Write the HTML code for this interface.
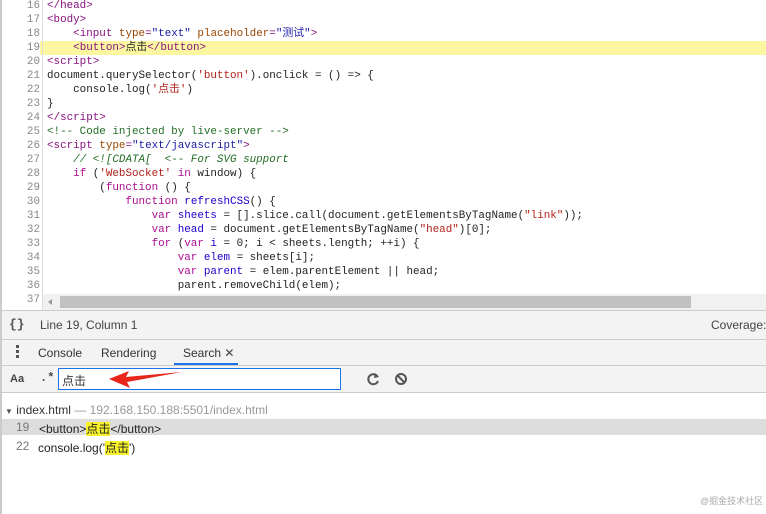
<!DOCTYPE html>
<html><head><meta charset="utf-8"><style>
*{margin:0;padding:0;box-sizing:border-box}
body{width:766px;height:514px;overflow:hidden;background:#fff;font-family:"Liberation Sans","Noto Sans CJK SC",sans-serif;position:relative}
.code{position:absolute;left:0;top:0;width:766px;height:294px;font-family:"Liberation Mono","Noto Sans CJK SC",monospace;font-size:10.9px;color:#222}
.ln{position:absolute;left:0;height:14px;line-height:14px;width:766px;white-space:pre}
.ln .n{display:inline-block;width:40px;text-align:right;color:#888;padding-right:0}
.ln .c{position:absolute;left:47px}
.hl{background:#fbf6a0}
.hl .n{background:#fff}
.t{color:#881280}.a{color:#994500}.v{color:#1a1aa6}.k{color:#aa0d91}.s{color:#b0221a}.cm{color:#236e25;font-style:italic}.d{color:#1c00cf}
.gut{position:absolute;left:42px;top:0;width:1px;height:310px;background:#ddd}
.lb{position:absolute;left:0;top:0;width:2px;height:514px;background:#ccc}
</style></head><body>
<div class="code">
<div class="ln" style="top:-1px"><span class="n">16</span><span class="c"><span class="t">&lt;/head&gt;</span></span></div>
<div class="ln" style="top:13px"><span class="n">17</span><span class="c"><span class="t">&lt;body&gt;</span></span></div>
<div class="ln" style="top:27px"><span class="n">18</span><span class="c">    <span class="t">&lt;input</span> <span class="a">type</span><span class="t">=</span><span class="v">"text"</span> <span class="a">placeholder</span><span class="t">=</span><span class="v">"测试"</span><span class="t">&gt;</span></span></div>
<div class="ln hl" style="top:41px"><span class="n">19</span><span class="c">    <span class="t">&lt;button&gt;</span>点击<span class="t">&lt;/button&gt;</span></span></div>
<div class="ln" style="top:55px"><span class="n">20</span><span class="c"><span class="t">&lt;script&gt;</span></span></div>
<div class="ln" style="top:69px"><span class="n">21</span><span class="c">document.querySelector(<span class="s">'button'</span>).onclick = () =&gt; {</span></div>
<div class="ln" style="top:83px"><span class="n">22</span><span class="c">    console.log(<span class="s">'点击'</span>)</span></div>
<div class="ln" style="top:97px"><span class="n">23</span><span class="c">}</span></div>
<div class="ln" style="top:111px"><span class="n">24</span><span class="c"><span class="t">&lt;/script&gt;</span></span></div>
<div class="ln" style="top:125px"><span class="n">25</span><span class="c"><span class="cm" style="font-style:normal">&lt;!-- Code injected by live-server --&gt;</span></span></div>
<div class="ln" style="top:139px"><span class="n">26</span><span class="c"><span class="t">&lt;script</span> <span class="a">type</span><span class="t">=</span><span class="v">"text/javascript"</span><span class="t">&gt;</span></span></div>
<div class="ln" style="top:153px"><span class="n">27</span><span class="c">    <span class="cm">// &lt;![CDATA[  &lt;-- For SVG support</span></span></div>
<div class="ln" style="top:167px"><span class="n">28</span><span class="c">    <span class="k">if</span> (<span class="s">'WebSocket'</span> <span class="k">in</span> window) {</span></div>
<div class="ln" style="top:181px"><span class="n">29</span><span class="c">        (<span class="k">function</span> () {</span></div>
<div class="ln" style="top:195px"><span class="n">30</span><span class="c">            <span class="k">function</span> <span class="d">refreshCSS</span>() {</span></div>
<div class="ln" style="top:209px"><span class="n">31</span><span class="c">                <span class="k">var</span> <span class="d">sheets</span> = [].slice.call(document.getElementsByTagName(<span class="s">"link"</span>));</span></div>
<div class="ln" style="top:223px"><span class="n">32</span><span class="c">                <span class="k">var</span> <span class="d">head</span> = document.getElementsByTagName(<span class="s">"head"</span>)[0];</span></div>
<div class="ln" style="top:237px"><span class="n">33</span><span class="c">                <span class="k">for</span> (<span class="k">var</span> <span class="d">i</span> = 0; i &lt; sheets.length; ++i) {</span></div>
<div class="ln" style="top:251px"><span class="n">34</span><span class="c">                    <span class="k">var</span> <span class="d">elem</span> = sheets[i];</span></div>
<div class="ln" style="top:265px"><span class="n">35</span><span class="c">                    <span class="k">var</span> <span class="d">parent</span> = elem.parentElement || head;</span></div>
<div class="ln" style="top:279px"><span class="n">36</span><span class="c">                    parent.removeChild(elem);</span></div>
<div class="ln" style="top:293px"><span class="n">37</span></div>
</div>
<div class="gut"></div>
<!-- scrollbar -->
<div style="position:absolute;left:43px;top:294px;width:723px;height:16px;background:#f1f1f1"></div>
<div style="position:absolute;left:48px;top:299px;width:0;height:0;border-top:3px solid transparent;border-bottom:3px solid transparent;border-right:4px solid #999"></div>
<div style="position:absolute;left:60px;top:296px;width:631px;height:12px;background:#c1c1c1"></div>
<!-- status bar -->
<div style="position:absolute;left:0;top:310px;width:766px;height:30px;background:#f3f3f3;border-top:1px solid #ccc;border-bottom:1px solid #ccc"></div>
<div style="position:absolute;left:9px;top:317px;font:bold 13px 'Liberation Mono',monospace;color:#555">{}</div>
<div style="position:absolute;left:40px;top:318px;font-size:12px;color:#444">Line 19, Column 1</div>
<div style="position:absolute;left:711px;top:318px;font-size:12px;color:#444">Coverage:</div>
<!-- tabs -->
<div style="position:absolute;left:0;top:340px;width:766px;height:26px;background:#f3f3f3;border-bottom:1px solid #ccc"></div>
<div style="position:absolute;left:16px;top:345px;width:3px;height:3px;background:#555;box-shadow:0 5px 0 #555,0 10px 0 #555"></div>
<div style="position:absolute;left:38px;top:346px;font-size:12px;color:#333">Console</div>
<div style="position:absolute;left:101px;top:346px;font-size:12px;color:#333">Rendering</div>
<div style="position:absolute;left:183px;top:346px;font-size:12px;color:#333">Search <span style="font-size:12px;color:#444">✕</span></div>
<div style="position:absolute;left:174px;top:363px;width:64px;height:2px;background:#1a73e8"></div>
<!-- search toolbar -->
<div style="position:absolute;left:0;top:366px;width:766px;height:27px;background:#f3f3f3;border-bottom:1px solid #ccc"></div>
<div style="position:absolute;left:10px;top:373px;font:bold 11px 'Liberation Sans',sans-serif;color:#444">Aa</div>
<div style="position:absolute;left:40px;top:371px;font:bold 12px 'Liberation Mono',monospace;color:#444">.*</div>
<div style="position:absolute;left:58px;top:368px;width:283px;height:22px;background:#fff;border:1px solid #1a73e8"></div>
<div style="position:absolute;left:62px;top:372px;font-size:12px;color:#333">点击</div>
<svg style="position:absolute;left:105px;top:368px" width="80" height="22"><polygon points="4,11 24,3 21,9 77,4 22,14 25,20" fill="#e8261c"/></svg>
<svg style="position:absolute;left:365px;top:371px" width="50" height="16"><path d="M12.5 5.5A5 5 0 1 0 13 10" stroke="#555" stroke-width="2" fill="none"/><polygon points="10,2 14,6 9,7" fill="#555"/><circle cx="36" cy="8" r="5" stroke="#555" stroke-width="2" fill="none"/><line x1="32.5" y1="4.5" x2="39.5" y2="11.5" stroke="#555" stroke-width="2"/></svg>
<!-- results -->
<div style="position:absolute;left:5px;top:403px;font-size:12px;color:#333"><span style="font-size:8px;color:#555">▼</span> index.html <span style="color:#999">— 192.168.150.188:5501/index.html</span></div>
<div style="position:absolute;left:2px;top:419px;width:764px;height:16px;background:#ddd"></div>
<div style="position:absolute;left:16px;top:420px;font-size:12px;color:#777">19</div>
<div style="position:absolute;left:39px;top:420px;font-size:12px;color:#222">&lt;button&gt;<span style="background:#f7f22a">点击</span>&lt;/button&gt;</div>
<div style="position:absolute;left:16px;top:439px;font-size:12px;color:#777">22</div>
<div style="position:absolute;left:38px;top:439px;font-size:12px;color:#222">console.log('<span style="background:#f7f22a">点击</span>')</div>
<div style="position:absolute;left:700px;top:494px;font-size:9px;color:#aaa">@掘金技术社区</div>
<div class="lb"></div>
</body></html>
